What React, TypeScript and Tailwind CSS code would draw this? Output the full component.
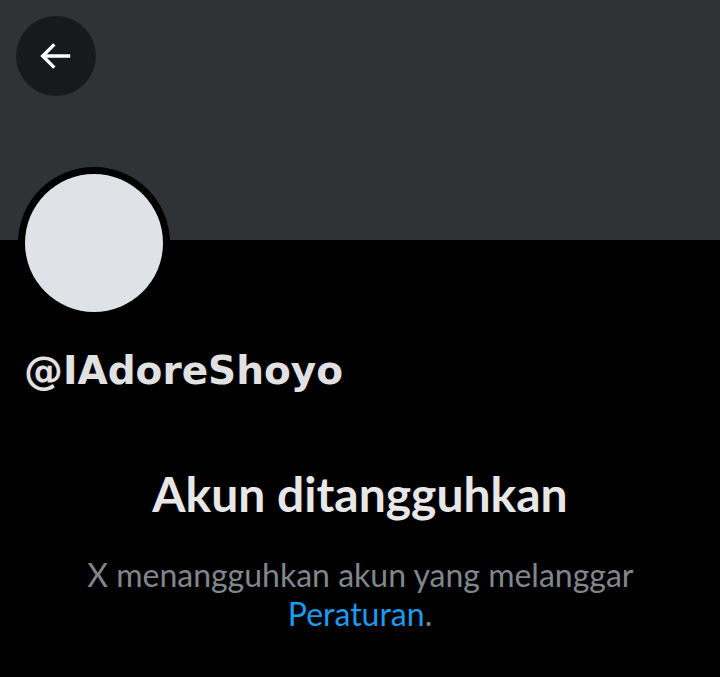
export default function App() {
  return (
    <div className="w-[720px] h-[677px] bg-black overflow-hidden font-['Lato',sans-serif]">
      {/* Banner */}
      <div className="h-[240px] bg-[#2f3336] pl-4 pt-4">
        <button className="w-20 h-20 rounded-full bg-[#17191b] flex items-center justify-center">
          <svg width="40" height="40" viewBox="0 0 24 24" fill="none" stroke="white" strokeWidth="2">
            <path d="M20.5 12H4.5M11 5l-7 7 7 7" />
          </svg>
        </button>
      </div>

      {/* Avatar */}
      <div className="pl-[18px] -mt-[73px]">
        <div className="w-[152px] h-[152px] rounded-full bg-black flex items-center justify-center">
          <div className="w-[138px] h-[138px] rounded-full bg-[#dfe3e7]" />
        </div>
      </div>

      {/* Handle */}
      <div className="pl-[24px] mt-[32px] text-[39px] font-bold text-[#e1e1e1] leading-none font-['DejaVu_Sans',sans-serif]">
        @IAdoreShoyo
      </div>

      {/* Suspended notice */}
      <div className="mt-[80px] flex flex-col items-center text-center">
        <h1 className="text-[48px] font-bold text-[#e7e7e7] leading-none">Akun ditangguhkan</h1>
        <p className="mt-[37px] text-[32px] leading-[39px] text-[#81868b] px-12">
          X menangguhkan akun yang melanggar{' '}
          <span className="text-[#1d9bf0]">Peraturan</span>.
        </p>
      </div>
    </div>
  )
}
